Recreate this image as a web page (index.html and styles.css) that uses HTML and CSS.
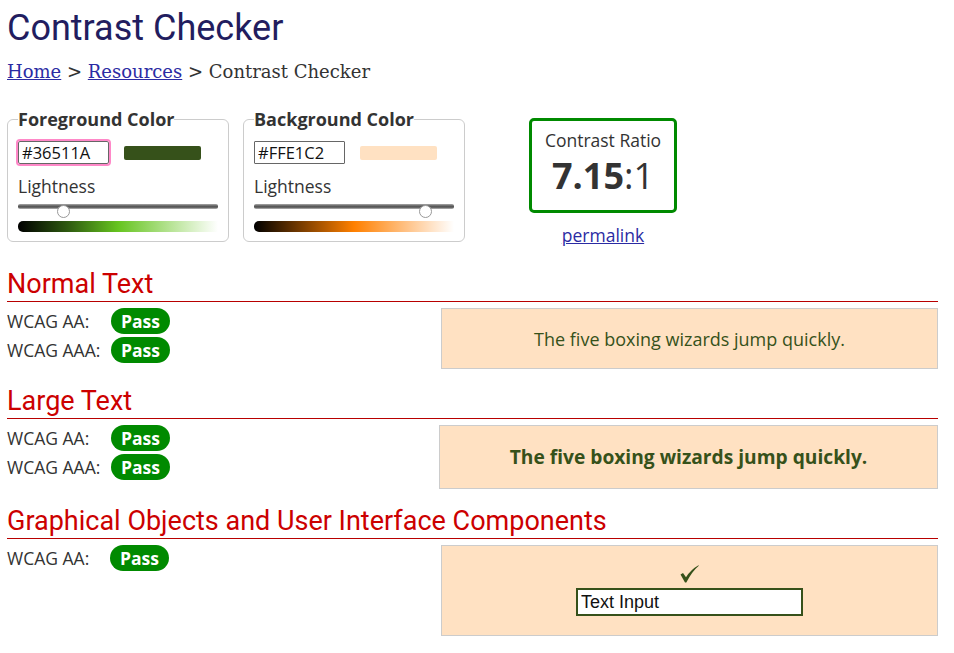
FILE: index.html
```html
<!DOCTYPE html>
<html lang="en">
<head>
<meta charset="utf-8">
<title>Contrast Checker</title>
<link rel="stylesheet" href="styles.css">
</head>
<body>
<h1 class="title">Contrast Checker</h1>
<nav class="crumbs"><a href="#">Home</a> &gt; <a href="#">Resources</a> &gt; Contrast Checker</nav>

<div class="controls">
  <fieldset class="picker">
    <legend class="picker-legend">Foreground Color</legend>
    <div class="hex-row">
      <input class="hex hex-focus" type="text" value="#36511A">
      <span class="swatch swatch-fg"></span>
    </div>
    <div class="light-label">Lightness</div>
    <div class="slider">
      <div class="track"></div>
      <span class="thumb" style="left: 39px"></span>
    </div>
    <div class="grad grad-fg"></div>
  </fieldset>

  <fieldset class="picker">
    <legend class="picker-legend">Background Color</legend>
    <div class="hex-row">
      <input class="hex" type="text" value="#FFE1C2">
      <span class="swatch swatch-bg"></span>
    </div>
    <div class="light-label">Lightness</div>
    <div class="slider">
      <div class="track"></div>
      <span class="thumb" style="left: 165px"></span>
    </div>
    <div class="grad grad-bg"></div>
  </fieldset>

  <div class="result">
    <div class="ratio-box">
      <div class="ratio-label">Contrast Ratio</div>
      <div class="ratio-value"><b>7.15</b>:1</div>
    </div>
    <a class="permalink" href="#">permalink</a>
  </div>
</div>

<section class="block block-first">
  <h2 class="block-title">Normal Text</h2>
  <div class="block-row">
    <div class="checks">
      <div class="check"><span class="check-label">WCAG AA:</span><span class="pass">Pass</span></div>
      <div class="check"><span class="check-label">WCAG AAA:</span><span class="pass">Pass</span></div>
    </div>
    <div class="sample sample-normal">The five boxing wizards jump quickly.</div>
  </div>
</section>

<section class="block">
  <h2 class="block-title">Large Text</h2>
  <div class="block-row">
    <div class="checks checks-large">
      <div class="check"><span class="check-label">WCAG AA:</span><span class="pass">Pass</span></div>
      <div class="check"><span class="check-label">WCAG AAA:</span><span class="pass">Pass</span></div>
    </div>
    <div class="sample sample-large">The five boxing wizards jump quickly.</div>
  </div>
</section>

<section class="block">
  <h2 class="block-title">Graphical Objects and User Interface Components</h2>
  <div class="block-row">
    <div class="checks">
      <div class="check"><span class="check-label check-label-narrow">WCAG AA:</span><span class="pass">Pass</span></div>
    </div>
    <div class="sample sample-ui">
      <svg class="tick" width="19" height="18" viewBox="0 0 19 18" aria-hidden="true">
        <path d="M0.5 9.5 L3 8 L6 12.2 Q11 4.5 18.5 0.3 L18.8 0.8 Q12 6.5 6.3 17.6 L5 17.6 Z" fill="#36511A"/>
      </svg>
      <input class="ui-input" type="text" value="Text Input">
    </div>
  </div>
</section>
</body>
</html>
```
FILE: styles.css
```css
html, body {
  margin: 0;
  padding: 0;
  background: #fff;
}

body {
  padding: 0 16px 0 7px;
  font-family: "Open Sans", "Noto Sans", sans-serif;
  font-size: 17.5px;
  line-height: 24px;
  color: #333;
}

.title {
  margin: 8px 0 0;
  font-family: Roboto, sans-serif;
  font-weight: 400;
  font-size: 36px;
  line-height: 40px;
  color: #221d5f;
}

.crumbs {
  margin-top: 12px;
  font-family: "DejaVu Serif", serif;
  font-size: 18px;
  line-height: 24px;
  color: #333;
}

.crumbs a,
.permalink {
  color: #2b2ba3;
  text-decoration: underline;
}

.controls {
  display: flex;
  align-items: flex-start;
  margin-top: 25px;
}

.picker {
  margin: 0 14px 0 0;
  padding: 0 10px 9px;
  width: 200px;
  border: 1px solid #ccc;
  border-radius: 6px;
  min-width: 0;
}

.picker-legend {
  padding: 0;
  font-weight: 700;
  font-size: 18px;
  line-height: 20px;
  color: #333;
}

.hex-row {
  display: flex;
  align-items: center;
  gap: 15px;
  margin-top: 12px;
}

.hex {
  box-sizing: border-box;
  width: 91px;
  height: 23px;
  margin: 0;
  padding: 0 3px;
  border: 1px solid #666;
  border-radius: 1px;
  font-family: "Open Sans", sans-serif;
  font-size: 16.5px;
  color: #111;
  background: #fff;
}

.hex-focus {
  outline: 2px solid #ff88c8;
  border-radius: 2px;
}

.swatch {
  width: 77px;
  height: 14px;
  border-radius: 2px;
}

.swatch-fg { background: #36511A; }
.swatch-bg { background: #FFE1C2; }

.light-label {
  margin-top: 10px;
}

.slider {
  position: relative;
  height: 14px;
  margin-top: 6px;
}

.track {
  height: 5px;
  margin-top: 5px;
  border-radius: 2px;
  background: linear-gradient(to bottom, #aaa 0%, #555 45%, #666 70%, #bbb 100%);
}

.thumb {
  position: absolute;
  top: 1px;
  box-sizing: border-box;
  width: 13px;
  height: 13px;
  border: 1px solid #999;
  border-radius: 50%;
  background: #fff;
}

.grad {
  height: 11px;
  margin-top: 3px;
  border-radius: 5px 0 0 5px;
}

.grad-fg {
  background: linear-gradient(to right, #000 0%, #2e5a10 25%, #66c41f 50%, #b3e28f 75%, #fff 100%);
}

.grad-bg {
  background: linear-gradient(to right, #000 0%, #804000 25%, #ff8000 50%, #ffbf80 75%, #fff 100%);
}

.result {
  display: flex;
  flex-direction: column;
  align-items: center;
  margin-left: 50px;
  margin-top: 9px;
}

.ratio-box {
  box-sizing: border-box;
  width: 148px;
  height: 95px;
  padding-top: 7px;
  border: 3px solid #008a00;
  border-radius: 5px;
  text-align: center;
}

.ratio-label {
  font-size: 17.5px;
  line-height: 24px;
}

.ratio-value {
  font-size: 36px;
  line-height: 48px;
  color: #333;
}

.ratio-value b {
  font-weight: 700;
}

.permalink {
  margin-top: 10px;
  font-size: 17.5px;
  line-height: 24px;
}

.block {
  margin-top: 17px;
}

.block-first {
  margin-top: 22px;
}

.block-title {
  margin: 0;
  padding-bottom: 2px;
  border-bottom: 1px solid #b80000;
  font-family: Roboto, sans-serif;
  font-weight: 400;
  font-size: 27px;
  line-height: 30px;
  color: #cc0000;
}

.block-row {
  display: flex;
  align-items: flex-start;
  margin-top: 6px;
}

.checks {
  flex: 0 0 434px;
}

.checks-large {
  flex-basis: 432px;
}

.check {
  display: flex;
  align-items: baseline;
  margin-bottom: 3px;
}

.check-label {
  width: 104px;
}

.check-label-narrow {
  width: 103px;
}

.pass {
  padding: 0 10px;
  height: 26px;
  line-height: 26px;
  border-radius: 13px;
  background: #008a00;
  color: #fff;
  font-weight: 700;
  font-size: 17.5px;
}

.sample {
  flex: 1;
  border: 1px solid #ccc;
  background: #FFE1C2;
  color: #36511A;
  text-align: center;
}

.sample-normal {
  padding: 18px 0 17px;
  font-size: 18px;
  line-height: 24px;
}

.sample-large {
  padding: 18px 0 18px;
  font-size: 19.2px;
  font-weight: 700;
  line-height: 26px;
}

.sample-ui {
  display: flex;
  flex-direction: column;
  align-items: center;
  padding: 19px 0 19px;
}

.tick {
  display: block;
  margin-bottom: 5px;
}

.ui-input {
  box-sizing: border-box;
  width: 227px;
  height: 28px;
  margin: 0;
  padding: 0 3px;
  border: 2px solid #36511A;
  border-radius: 0;
  background: #fff;
  font-family: "Liberation Sans", Arial, sans-serif;
  font-size: 18px;
  color: #111;
}
```
